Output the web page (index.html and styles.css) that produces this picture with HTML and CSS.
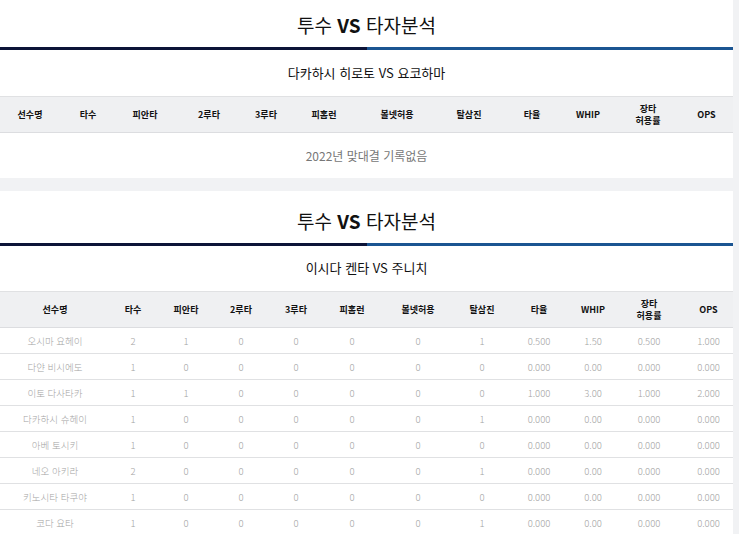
FILE: index.html
```html
<!DOCTYPE html>
<html lang="ko">
  <head>
    <meta charset="UTF-8" />
    <meta name="viewport" content="width=device-width, initial-scale=1.0" />
    <title>투수 VS 타자분석</title>
    <link rel="stylesheet" href="styles.css">
  </head>
  <body>
    <div class="board first">
      <h2 class="board-title">투수 <b>VS</b> 타자분석</h2>
      <div class="title-line"><span class="line-left"></span><span class="line-right"></span></div>
      <h3 class="matchup">다카하시 히로토 VS 요코하마</h3>
      <table class="stats stats-empty">
        <thead>
          <tr>
            <th class="c1">선수명</th>
            <th class="c2">타수</th>
            <th class="c3">피안타</th>
            <th class="c4">2루타</th>
            <th class="c5">3루타</th>
            <th class="c6">피홈런</th>
            <th class="c7">볼넷허용</th>
            <th class="c8">탈삼진</th>
            <th class="c9">타율</th>
            <th class="c10">WHIP</th>
            <th class="c11">장타<br>허용률</th>
            <th class="c12">OPS</th>
          </tr>
        </thead>
        <tbody>
          <tr>
            <td class="no-record" colspan="12">2022년 맞대결 기록없음</td>
          </tr>
        </tbody>
      </table>
    </div>

    <div class="board">
      <h2 class="board-title">투수 <b>VS</b> 타자분석</h2>
      <div class="title-line"><span class="line-left"></span><span class="line-right"></span></div>
      <h3 class="matchup tight">이시다 켄타 VS 주니치</h3>
      <table class="stats stats-full">
        <thead>
          <tr>
            <th class="c1">선수명</th>
            <th class="c2">타수</th>
            <th class="c3">피안타</th>
            <th class="c4">2루타</th>
            <th class="c5">3루타</th>
            <th class="c6">피홈런</th>
            <th class="c7">볼넷허용</th>
            <th class="c8">탈삼진</th>
            <th class="c9">타율</th>
            <th class="c10">WHIP</th>
            <th class="c11">장타<br>허용률</th>
            <th class="c12">OPS</th>
          </tr>
        </thead>
        <tbody>
          <tr><td>오시마 요헤이</td><td>2</td><td>1</td><td>0</td><td>0</td><td>0</td><td>0</td><td>1</td><td>0.500</td><td>1.50</td><td>0.500</td><td>1.000</td></tr>
          <tr><td>다얀 비시에도</td><td>1</td><td>0</td><td>0</td><td>0</td><td>0</td><td>0</td><td>0</td><td>0.000</td><td>0.00</td><td>0.000</td><td>0.000</td></tr>
          <tr><td>이토 다사타카</td><td>1</td><td>1</td><td>0</td><td>0</td><td>0</td><td>0</td><td>0</td><td>1.000</td><td>3.00</td><td>1.000</td><td>2.000</td></tr>
          <tr><td>다카하시 슈헤이</td><td>1</td><td>0</td><td>0</td><td>0</td><td>0</td><td>0</td><td>1</td><td>0.000</td><td>0.00</td><td>0.000</td><td>0.000</td></tr>
          <tr><td>아베 토시키</td><td>1</td><td>0</td><td>0</td><td>0</td><td>0</td><td>0</td><td>0</td><td>0.000</td><td>0.00</td><td>0.000</td><td>0.000</td></tr>
          <tr><td>네오 아키라</td><td>2</td><td>0</td><td>0</td><td>0</td><td>0</td><td>0</td><td>1</td><td>0.000</td><td>0.00</td><td>0.000</td><td>0.000</td></tr>
          <tr><td>키노시타 타쿠야</td><td>1</td><td>0</td><td>0</td><td>0</td><td>0</td><td>0</td><td>0</td><td>0.000</td><td>0.00</td><td>0.000</td><td>0.000</td></tr>
          <tr><td>코다 요타</td><td>1</td><td>0</td><td>0</td><td>0</td><td>0</td><td>0</td><td>1</td><td>0.000</td><td>0.00</td><td>0.000</td><td>0.000</td></tr>
        </tbody>
      </table>
    </div>
  </body>
</html>
```

FILE: styles.css
```css
:root {
  --page-bg: #f1f2f4;
  --card-bg: #ffffff;
  --navy: #0c1438;
  --blue: #1b5592;
  --head-bg: #eff0f2;
  --row-border: #e0e1e3;
  --text-dark: #222;
  --text-gray: #a3a3a3;
}

body {
  margin: 0;
  padding: 0;
  background-color: var(--page-bg);
  font-family: "Noto Sans CJK KR", "Noto Sans", sans-serif;
  color: var(--text-dark);
  overflow: hidden;
}

.board {
  width: 733px;
  background-color: var(--card-bg);
  margin-bottom: 13px;
  overflow: hidden;
}

/* page is scrolled a little, first card is cut at the top */
.board.first {
  margin-top: -5px;
}

.board-title {
  margin: 0;
  height: 52px;
  line-height: 59px;
  text-align: center;
  font-size: 19px;
  font-weight: 400;
  color: #111;
}

.board-title b {
  font-weight: 700;
}

.title-line {
  display: flex;
  height: 3px;
}

.line-left {
  flex: 1;
  background-color: var(--navy);
}

.line-right {
  flex: 1;
  background-color: var(--blue);
}

.matchup {
  margin: 0;
  height: 46px;
  line-height: 46px;
  text-align: center;
  font-size: 13px;
  font-weight: 400;
  color: #111;
}

.matchup.tight {
  height: 45px;
  line-height: 44px;
}

.stats {
  width: 733px;
  border-collapse: collapse;
  table-layout: fixed;
}

.stats th {
  background-color: var(--head-bg);
  border-top: 1px solid #e0e1e3;
  border-bottom: 1px solid #dcdde0;
  height: 35px;
  padding: 0;
  font-size: 9px;
  font-weight: 700;
  line-height: 12px;
  color: #111;
  text-align: center;
}

.stats td {
  height: 25px;
  padding: 0;
  border-bottom: 1px solid var(--row-border);
  font-size: 9.5px;
  font-weight: 300;
  color: var(--text-gray);
  text-align: center;
}

.stats td.no-record {
  height: 45px;
  border-bottom: none;
  font-size: 12px;
  font-weight: 400;
  color: #777;
}

.stats-empty .c1 { width: 60px; }
.stats-empty .c2 { width: 56px; }
.stats-empty .c3 { width: 58px; }
.stats-empty .c4 { width: 70px; }
.stats-empty .c5 { width: 44px; }
.stats-empty .c6 { width: 72px; }
.stats-empty .c7 { width: 74px; }
.stats-empty .c8 { width: 70px; }
.stats-empty .c9 { width: 56px; }
.stats-empty .c10 { width: 56px; }
.stats-empty .c11 { width: 64px; }
.stats-empty .c12 { width: 53px; }

.stats-full .c1 { width: 110px; }
.stats-full .c2 { width: 46px; }
.stats-full .c3 { width: 60px; }
.stats-full .c4 { width: 50px; }
.stats-full .c5 { width: 60px; }
.stats-full .c6 { width: 52px; }
.stats-full .c7 { width: 80px; }
.stats-full .c8 { width: 48px; }
.stats-full .c9 { width: 66px; }
.stats-full .c10 { width: 42px; }
.stats-full .c11 { width: 70px; }
.stats-full .c12 { width: 49px; }
```
